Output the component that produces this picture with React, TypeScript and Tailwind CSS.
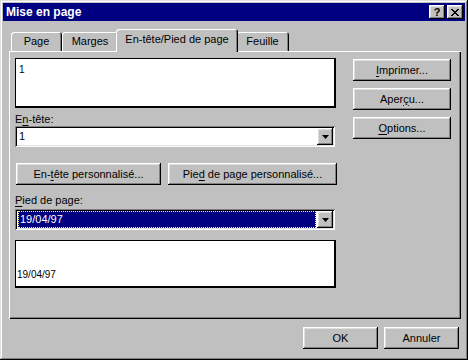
import React from 'react';

const raised =
  'shadow-[inset_-1px_-1px_#000,inset_1px_1px_#fff,inset_-2px_-2px_#808080,inset_2px_2px_#dfdfdf]';
const sunken =
  'shadow-[inset_1px_1px_#808080,inset_-1px_-1px_#fff,inset_2px_2px_#000,inset_-2px_-2px_#dfdfdf]';

const Btn: React.FC<{ className?: string; children: React.ReactNode }> = ({ className = '', children }) => (
  <div className={`flex items-center justify-center bg-[#c0c0c0] text-black ${raised} ${className}`}>
    <span className="leading-[13px]">{children}</span>
  </div>
);

const U: React.FC<{ children: React.ReactNode }> = ({ children }) => (
  <span className="underline underline-offset-[2px] decoration-1">{children}</span>
);

const Arrow = () => (
  <svg width="7" height="4" viewBox="0 0 7 4" className="block">
    <path d="M0 0h7L3.5 4z" fill="#000" />
  </svg>
);

const Combo: React.FC<{ children: React.ReactNode }> = ({ children }) => (
  <div className={`flex h-[21px] w-[320px] bg-white p-[2px] ${sunken}`}>
    <div className="flex flex-1 items-center">{children}</div>
    <div className={`flex h-[17px] w-[16px] items-center justify-center bg-[#c0c0c0] ${raised}`}>
      <Arrow />
    </div>
  </div>
);

const Tab: React.FC<{ label: string; w: string; active?: boolean }> = ({ label, w, active }) => (
  <div
    className={`flex items-center justify-center rounded-t-[3px] bg-[#c0c0c0] shadow-[inset_1px_1px_#fff,inset_-1px_0_#000,inset_-2px_0_#808080] ${w} ${
      active ? 'relative z-10 -mx-[2px] -mb-px h-[23px] pb-[2px]' : 'h-[19px]'
    }`}
  >
    {label}
  </div>
);

const CloseGlyph = () => (
  <svg width="8" height="7" viewBox="0 0 8 7" className="block" shapeRendering="crispEdges">
    <path
      d="M0 0h2v1H0zM6 0h2v1H6zM1 1h2v1H1zM5 1h2v1H5zM2 2h4v1H2zM3 3h2v1H3zM2 4h4v1H2zM1 5h2v1H1zM5 5h2v1H5zM0 6h2v1H0zM6 6h2v1H6z"
      fill="#000"
    />
  </svg>
);

export default function App() {
  return (
    <div
      className={`flex h-[360px] w-[468px] flex-col bg-[#c0c0c0] p-[3px] text-[11px] text-black shadow-[inset_-1px_-1px_#000,inset_1px_1px_#dfdfdf,inset_-2px_-2px_#808080,inset_2px_2px_#fff]`}
      style={{ fontFamily: '"Liberation Sans", Arial, sans-serif' }}
    >
      {/* Title bar */}
      <div className="flex h-[18px] items-center justify-between bg-[#000080] pl-[3px] pr-[2px]">
        <span className="text-[12px] font-bold leading-none text-white">Mise en page</span>
        <div className="flex gap-[2px]">
          <div className={`flex h-[14px] w-[16px] items-center justify-center bg-[#c0c0c0] ${raised}`}>
            <span className="text-[11px] font-bold leading-none">?</span>
          </div>
          <div className={`flex h-[14px] w-[16px] items-center justify-center bg-[#c0c0c0] ${raised}`}>
            <CloseGlyph />
          </div>
        </div>
      </div>

      {/* Tabs */}
      <div className="mt-[8px] flex h-[22px] items-end pl-[8px]">
        <Tab label="Page" w="w-[51px]" />
        <Tab label="Marges" w="w-[56px]" />
        <Tab label="En-tête/Pied de page" w="w-[122px]" active />
        <Tab label="Feuille" w="w-[53px]" />
      </div>

      {/* Panel */}
      <div className="ml-[6px] flex h-[268px] w-[452px] bg-[#c0c0c0] shadow-[inset_1px_1px_#fff,inset_-1px_-1px_#000,inset_-2px_-2px_#808080]">
        <div className="ml-[6px] flex w-[322px] flex-col pt-[7px]">
          <div className="h-[50px] w-[321px] border-t border-l border-r-2 border-b-2 border-black bg-white pl-[3px] pt-[5px] text-[10px] leading-[12px]">
            1
          </div>
          <div className="mt-[5px] h-[13px] leading-[13px]">
            E<U>n</U>-tête:
          </div>
          <Combo>
            <span className="pl-[2px] leading-[13px]">1</span>
          </Combo>
          <div className="mt-[16px] flex gap-[7px] pl-px">
            <Btn className="h-[22px] w-[145px]">
              En-<U>t</U>ête personnalisé...
            </Btn>
            <Btn className="h-[22px] w-[169px]">
              Pie<U>d</U> de page personnalisé...
            </Btn>
          </div>
          <div className="mt-[9px] h-[13px] leading-[13px]">
            <U>P</U>ied de page:
          </div>
          <div className="mt-[2px]">
            <Combo>
              <div className="mx-px flex h-[17px] flex-1 items-center border border-dotted border-[#ffff80] bg-[#000080] pl-px leading-[13px] text-white">
                19/04/97
              </div>
            </Combo>
          </div>
          <div className="mt-[10px] h-[48px] w-[321px] border-t border-l border-r-2 border-b-2 border-black bg-white pl-px pt-[28px] text-[10px] leading-[12px]">
            19/04/97
          </div>
        </div>
        <div className="ml-[16px] flex w-[98px] flex-col gap-[7px] pt-[8px]">
          <Btn className="h-[22px]">
            <U>I</U>mprimer...
          </Btn>
          <Btn className="h-[22px]">
            Aper<U>ç</U>u...
          </Btn>
          <Btn className="h-[22px]">
            <U>O</U>ptions...
          </Btn>
        </div>
      </div>

      {/* Footer buttons */}
      <div className="mt-[8px] flex justify-end gap-[6px] pr-[6px]">
        <Btn className="h-[22px] w-[75px]">OK</Btn>
        <Btn className="h-[22px] w-[75px]">Annuler</Btn>
      </div>
    </div>
  );
}
